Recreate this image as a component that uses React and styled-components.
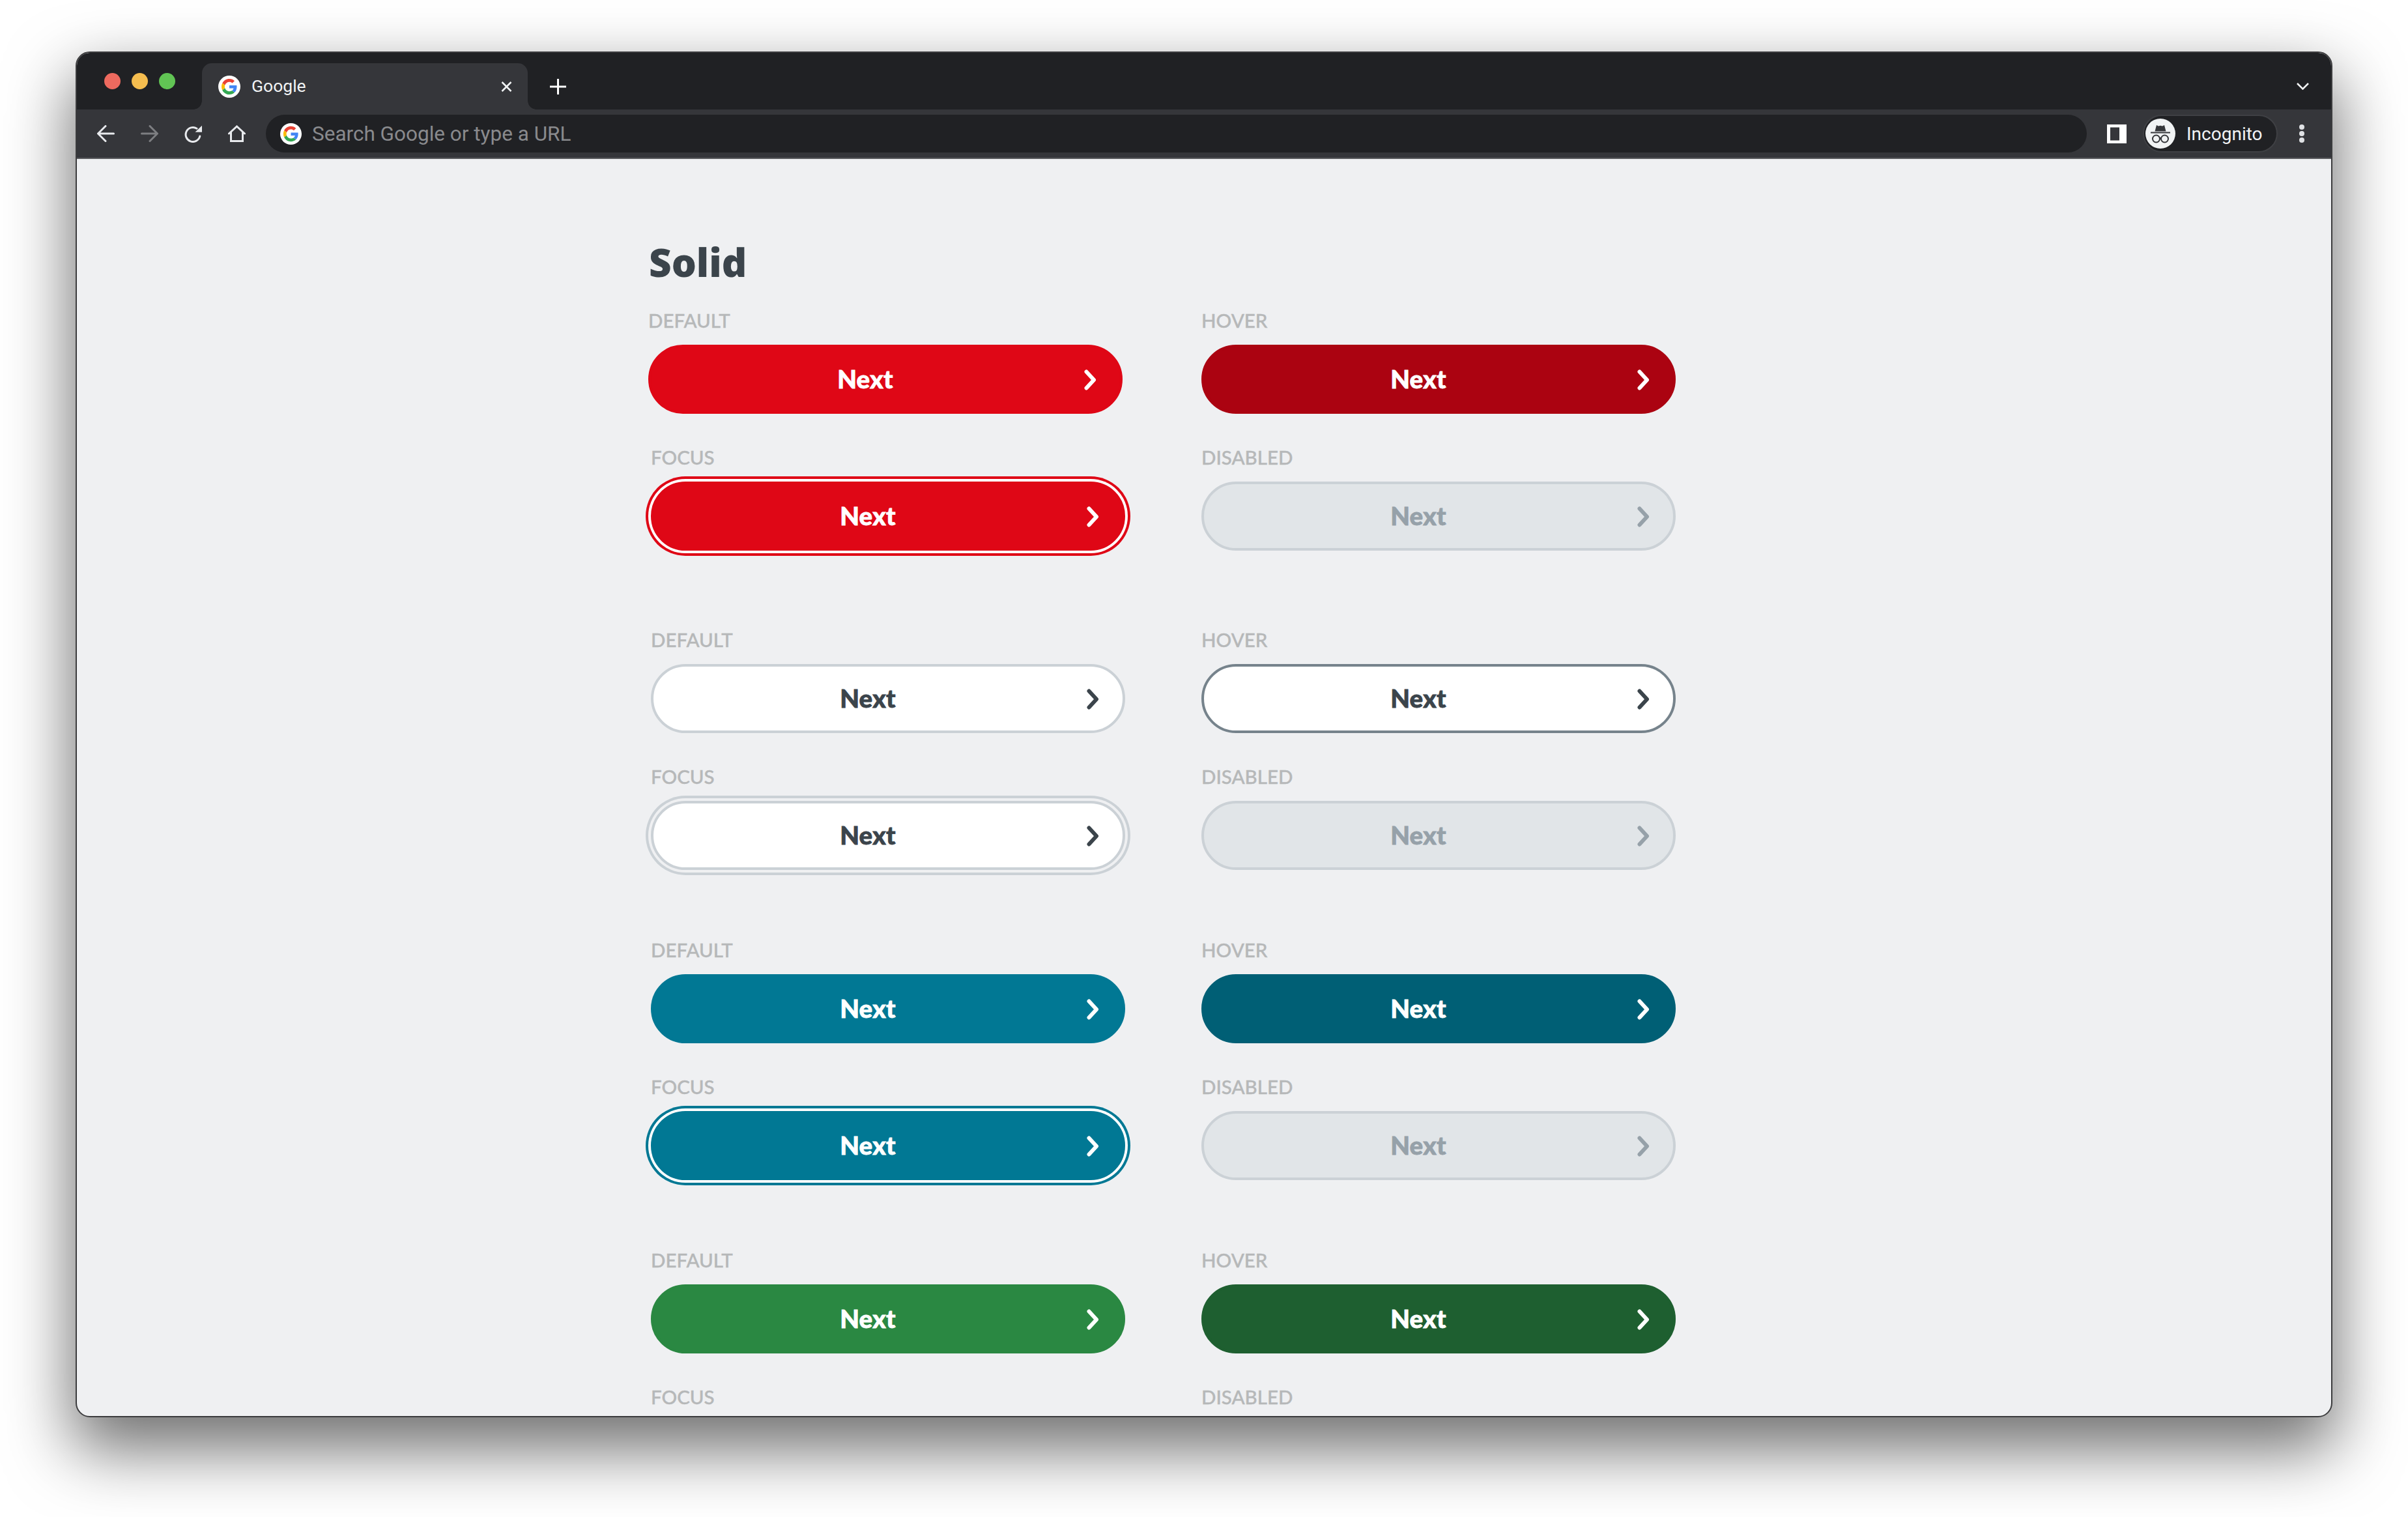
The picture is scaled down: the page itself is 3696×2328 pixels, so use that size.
import React from "react";
import styled, { createGlobalStyle } from "styled-components";

const GlobalStyle = createGlobalStyle`
  html, body {
    margin: 0;
    background: #fff;
  }
`;

const Page = styled.div`
  width: 3696px;
  height: 2328px;
  padding: 79px 0 0 116px;
  box-sizing: border-box;
  overflow: hidden;
`;

const BrowserWindow = styled.div`
  width: 3464px;
  height: 2096px;
  box-sizing: border-box;
  display: flex;
  flex-direction: column;
  border: 2px solid #3b3b3d;
  border-radius: 22px;
  overflow: hidden;
  background: #eff0f2;
  box-shadow: 0 44px 100px 6px rgba(0, 0, 0, 0.56);
`;

const TabStrip = styled.div`
  height: 87px;
  flex: none;
  display: flex;
  align-items: center;
  padding: 0 34px 0 42px;
  background: #202124;
  font-family: Roboto, sans-serif;
  color: #fff;
`;

const Lights = styled.div`
  display: flex;
  gap: 17px;
  margin-right: 41px;
`;

const Light = styled.span`
  width: 25px;
  height: 25px;
  border-radius: 50%;
  background: ${(p) => p.$color};
`;

const Tab = styled.div`
  position: relative;
  width: 500px;
  height: 71px;
  align-self: flex-end;
  box-sizing: border-box;
  display: flex;
  align-items: center;
  padding: 0 24px 0 25px;
  border-radius: 15px 15px 0 0;
  background: #35363a;

  &::before,
  &::after {
    content: "";
    position: absolute;
    bottom: 0;
    width: 13px;
    height: 13px;
  }
  &::before {
    left: -13px;
    background: radial-gradient(circle at 0 0, transparent 12.5px, #35363a 13px);
  }
  &::after {
    right: -13px;
    background: radial-gradient(circle at 100% 0, transparent 12.5px, #35363a 13px);
  }
`;

const TabTitle = styled.span`
  flex: 1;
  margin-left: 17px;
  padding-bottom: 2px;
  font-size: 26.5px;
  color: #f1f3f4;
`;

const Favicon = styled.svg`
  flex: none;
  display: block;
`;

const PlainIcon = styled.svg`
  flex: none;
  display: block;
  margin-left: ${(p) => p.$left || 0}px;
`;

const NewTabIcon = styled.svg`
  flex: none;
  display: block;
  margin: 16px 0 0 34px;
`;

const TabListIcon = styled.svg`
  flex: none;
  display: block;
  margin: 16px 0 0 auto;
`;

const Toolbar = styled.div`
  height: 76px;
  flex: none;
  box-sizing: border-box;
  display: flex;
  align-items: center;
  padding: 0 41px 0 31px;
  background: #35363a;
  border-bottom: 2px solid #5c5d60;
  font-family: Roboto, sans-serif;
`;

const NavIcons = styled.div`
  display: flex;
  align-items: center;
  gap: 40px;
  margin-right: 31px;
`;

const AddressBar = styled.div`
  flex: 1;
  height: 58px;
  display: flex;
  align-items: center;
  padding-left: 22px;
  border-radius: 29px;
  background: #202124;
`;

const AddressText = styled.span`
  margin-left: 16px;
  font-size: 31.5px;
  color: #898a8d;
`;

const IncognitoPill = styled.div`
  width: 207px;
  height: 58px;
  margin-left: 25px;
  box-sizing: border-box;
  display: flex;
  align-items: center;
  padding-left: 2px;
  border: 2px solid #3f4044;
  border-radius: 29px;
  background: #202124;
`;

const IncognitoText = styled.span`
  margin-left: 17px;
  font-size: 28px;
  color: #f1f3f4;
`;

const MenuDots = styled.div`
  margin-left: 33px;
  display: flex;
  flex-direction: column;
  gap: 2px;
`;

const MenuDot = styled.span`
  width: 8px;
  height: 8px;
  border-radius: 50%;
  background: #dfe1e4;
`;

const Content = styled.div`
  flex: 1;
  overflow: hidden;
  padding: 128px 0 0 881px;
  font-family: Lato, sans-serif;
`;

const Heading = styled.h1`
  margin: 0 0 45px -3px;
  font-family: "Open Sans", sans-serif;
  font-size: 60px;
  line-height: 60px;
  font-weight: 800;
  color: #3b444b;
`;

const Group = styled.div`
  display: grid;
  grid-template-columns: 728px 728px;
  column-gap: 117px;
  row-gap: 52px;
  margin-bottom: ${(p) => (p.$first ? 122 : 108)}px;
`;

const Cell = styled.div`
  margin-left: ${(p) => (p.$nudge ? -4 : 0)}px;
`;

const StateLabel = styled.div`
  margin: 0 0 22px 0;
  font-size: 29.5px;
  line-height: 30px;
  font-weight: 500;
  -webkit-text-stroke: 0.4px #b6b8b9;
  color: #b6b8b9;
`;

const variants = {
  red: { bg: "#df0716", fg: "#fff", line: "#df0716", ring: "#df0716", gap: "#fff" },
  redHover: { bg: "#ab0311", fg: "#fff", line: "#ab0311" },
  white: { bg: "#fff", fg: "#3b444b", line: "#cbd1d6", ring: "#cbd1d6", gap: "#eff0f2" },
  whiteHover: { bg: "#fff", fg: "#3b444b", line: "#76838c" },
  teal: { bg: "#017894", fg: "#fff", line: "#017894", ring: "#017894", gap: "#fff" },
  tealHover: { bg: "#005f75", fg: "#fff", line: "#005f75" },
  green: { bg: "#2a8842", fg: "#fff", line: "#2a8842", ring: "#2a8842", gap: "#fff" },
  greenHover: { bg: "#1e5f30", fg: "#fff", line: "#1e5f30" },
  disabled: { bg: "#e1e5e8", fg: "#96a1a9", line: "#cbd1d6" },
};

const Button = styled.button`
  width: 728px;
  height: 106px;
  box-sizing: border-box;
  display: flex;
  align-items: center;
  padding: 0 36px;
  border: 4px solid ${(p) => variants[p.$kind].line};
  border-radius: 53px;
  background: ${(p) => variants[p.$kind].bg};
  color: ${(p) => variants[p.$kind].fg};
  font-family: Lato, sans-serif;
  font-size: 38.5px;
  font-weight: 900;
  letter-spacing: 0.3px;
  -webkit-text-stroke: 0.8px ${(p) => variants[p.$kind].fg};
  box-shadow: ${(p) =>
    p.$focus
      ? `0 0 0 4px ${variants[p.$kind].gap}, 0 0 0 8px ${variants[p.$kind].ring}`
      : "none"};
`;

const ButtonText = styled.span`
  flex: 1;
  margin-right: 43px;
  padding-bottom: 3px;
  text-align: center;
`;

const ChevronIcon = styled.svg`
  flex: none;
  display: block;
  margin-top: 2px;
`;

const GoogleMark = ({ size }) => (
  <Favicon width={size} height={size} viewBox="0 0 68 68">
    <circle cx="34" cy="34" r="34" fill="#fff" />
    <g transform="translate(10 10)">
      <path fill="#EA4335" d="M24 9.5c3.54 0 6.71 1.22 9.21 3.6l6.85-6.85C35.9 2.38 30.47 0 24 0 14.62 0 6.51 5.38 2.56 13.22l7.98 6.19C12.43 13.72 17.74 9.5 24 9.5z" />
      <path fill="#4285F4" d="M46.98 24.55c0-1.57-.15-3.09-.38-4.55H24v9.02h12.94c-.58 2.96-2.26 5.48-4.78 7.18l7.73 6c4.51-4.18 7.09-10.36 7.09-17.65z" />
      <path fill="#FBBC05" d="M10.53 28.59c-.48-1.45-.76-2.99-.76-4.59s.27-3.14.76-4.59l-7.98-6.19C.92 16.46 0 20.12 0 24c0 3.88.92 7.54 2.56 10.78l7.97-6.19z" />
      <path fill="#34A853" d="M24 48c6.48 0 11.93-2.13 15.89-5.81l-7.73-6c-2.15 1.45-4.92 2.3-8.16 2.3-6.26 0-11.57-4.22-13.47-9.91l-7.98 6.19C6.51 42.62 14.62 48 24 48z" />
    </g>
  </Favicon>
);

const Chevron = () => (
  <ChevronIcon width="19" height="32" viewBox="0 0 19 32" fill="none" stroke="currentColor" strokeWidth="6" strokeLinecap="round" strokeLinejoin="round">
    <path d="M3.500 3.500 15 16 3.500 28.500" />
  </ChevronIcon>
);

const BackIcon = () => (
  <PlainIcon width="27" height="26" viewBox="0 0 27 26" fill="none" stroke="#e8eaed" strokeWidth="3" strokeLinecap="round" strokeLinejoin="round">
    <path d="M25.500 13H2M13 1.500 1.500 13 13 24.500" />
  </PlainIcon>
);

const ForwardIcon = () => (
  <PlainIcon width="27" height="26" viewBox="0 0 27 26" fill="none" stroke="#7d7e81" strokeWidth="3" strokeLinecap="round" strokeLinejoin="round">
    <path d="M1.500 13H25M14 1.500 25.500 13 14 24.500" />
  </PlainIcon>
);

const ReloadIcon = () => (
  <PlainIcon width="27" height="27" viewBox="0 0 27 27">
    <path d="M19 5.200A11 11 0 1 0 23.800 17" fill="none" stroke="#e8eaed" strokeWidth="3" strokeLinecap="round" />
    <path d="M27 .7V10.700H16.500z" fill="#e8eaed" />
  </PlainIcon>
);

const HomeIcon = () => (
  <PlainIcon width="27" height="26" viewBox="0 0 27 26" fill="none" stroke="#e8eaed" strokeWidth="3" strokeLinecap="round" strokeLinejoin="miter">
    <path d="M1.500 13 13.500 2 25.500 13M4.500 11V24.500H22.500V11" />
  </PlainIcon>
);

const SidePanelIcon = () => (
  <PlainIcon $left={31} width="30" height="29" viewBox="0 0 30 29">
    <path fill="#fff" fillRule="evenodd" d="M0 0H30V29H0zM5 4.500V24.500H19V4.500z" />
  </PlainIcon>
);

const IncognitoAvatar = () => (
  <Favicon width="46" height="46" viewBox="0 0 46 46">
    <circle cx="23" cy="23" r="23" fill="#f1f3f4" />
    <path fill="#35363a" d="M17 10l3 1.500 3-.8 3 .8 3-1.500 2.500 9.500H14.500z" />
    <path stroke="#35363a" strokeWidth="2" d="M8 21.500H38" />
    <g fill="none" stroke="#35363a" strokeWidth="2">
      <circle cx="16.500" cy="31" r="5.500" />
      <circle cx="29.500" cy="31" r="5.500" />
      <path d="M22 30h2" />
    </g>
  </Favicon>
);

const groups = [
  { base: "red", hover: "redHover", first: true },
  { base: "white", hover: "whiteHover" },
  { base: "teal", hover: "tealHover" },
  { base: "green", hover: "greenHover", cut: true },
];

const Sample = ({ label, kind, focus, nudge, labelOnly }) => (
  <Cell $nudge={nudge}>
    <StateLabel>{label}</StateLabel>
    {!labelOnly && (
      <Button $kind={kind} $focus={focus} disabled={kind === "disabled"}>
        <ButtonText>Next</ButtonText>
        <Chevron />
      </Button>
    )}
  </Cell>
);

const App = () => (
  <Page>
    <GlobalStyle />
    <BrowserWindow>
      <TabStrip>
        <Lights>
          <Light $color="#ee6a5f" />
          <Light $color="#f5bd4f" />
          <Light $color="#61c454" />
        </Lights>
        <Tab>
          <GoogleMark size={34} />
          <TabTitle>Google</TabTitle>
          <PlainIcon width="17" height="16" viewBox="0 0 17 16" fill="none" stroke="#f1f3f4" strokeWidth="2.500">
            <path d="M1.500 1 15.500 15M15.500 1 1.500 15" />
          </PlainIcon>
        </Tab>
        <NewTabIcon width="25" height="24" viewBox="0 0 25 24" fill="none" stroke="#fff" strokeWidth="3">
          <path d="M12.500 0V24M0 12H25" />
        </NewTabIcon>
        <TabListIcon width="19" height="11" viewBox="0 0 19 11" fill="none" stroke="#f1f3f4" strokeWidth="2.500">
          <path d="M1 1 9.500 9.500 18 1" />
        </TabListIcon>
      </TabStrip>
      <Toolbar>
        <NavIcons>
          <BackIcon />
          <ForwardIcon />
          <ReloadIcon />
          <HomeIcon />
        </NavIcons>
        <AddressBar>
          <GoogleMark size={33} />
          <AddressText>Search Google or type a URL</AddressText>
        </AddressBar>
        <SidePanelIcon />
        <IncognitoPill>
          <IncognitoAvatar />
          <IncognitoText>Incognito</IncognitoText>
        </IncognitoPill>
        <MenuDots>
          <MenuDot />
          <MenuDot />
          <MenuDot />
        </MenuDots>
      </Toolbar>
      <Content>
        <Heading>Solid</Heading>
        {groups.map((g) => (
          <Group key={g.base} $first={g.first}>
            <Sample label="DEFAULT" kind={g.base} nudge={g.first} />
            <Sample label="HOVER" kind={g.hover} />
            <Sample label="FOCUS" kind={g.base} focus labelOnly={g.cut} />
            <Sample label="DISABLED" kind="disabled" labelOnly={g.cut} />
          </Group>
        ))}
      </Content>
    </BrowserWindow>
  </Page>
);

export default App;
